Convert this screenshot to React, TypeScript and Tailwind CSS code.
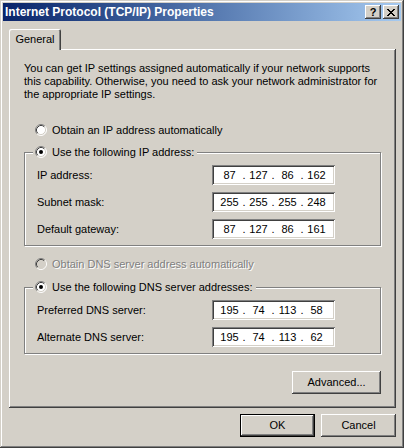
import React from "react";

const raised =
  "shadow-[inset_-1px_-1px_#404040,inset_1px_1px_#ffffff,inset_-2px_-2px_#808080]";
const sunken =
  "shadow-[inset_1px_1px_#808080,inset_-1px_-1px_#ffffff,inset_2px_2px_#404040,inset_-2px_-2px_#d4d0c8]";

function Radio({ checked, disabled }: { checked?: boolean; disabled?: boolean }) {
  return (
    <svg width="12" height="12" viewBox="0 0 12 12" className="shrink-0">
      <circle cx="6" cy="6" r="5" fill={disabled ? "#d4d0c8" : "#ffffff"} />
      <path d="M2.11 9.89 A5.5 5.5 0 0 1 9.89 2.11" stroke="#808080" fill="none" />
      <path d="M9.89 2.11 A5.5 5.5 0 0 1 2.11 9.89" stroke="#ffffff" fill="none" />
      <path d="M2.82 9.18 A4.5 4.5 0 0 1 9.18 2.82" stroke="#404040" fill="none" />
      <path d="M9.18 2.82 A4.5 4.5 0 0 1 2.82 9.18" stroke="#d4d0c8" fill="none" />
      {checked && <circle cx="6" cy="6" r="2" fill="#000000" />}
    </svg>
  );
}

function CloseGlyph() {
  const rows = ["11000011", "01100110", "00111100", "00011000", "00111100", "01100110", "11000011"];
  return (
    <svg width="8" height="7" viewBox="0 0 8 7" shapeRendering="crispEdges">
      {rows.map((r, y) =>
        r.split("").map((c, x) => (c === "1" ? <rect key={`${x}-${y}`} x={x} y={y} width="1" height="1" fill="#000" /> : null))
      )}
    </svg>
  );
}

function IpField({ parts }: { parts: string[] }) {
  return (
    <div className={`w-[123px] h-[20px] bg-white ${sunken} flex items-center pl-[5px]`}>
      {parts.map((p, i) => (
        <React.Fragment key={i}>
          {i > 0 && <span className="w-[4px] text-center">.</span>}
          <span className="w-[25px] text-center">{p}</span>
        </React.Fragment>
      ))}
    </div>
  );
}

function Row({ label, parts }: { label: string; parts: string[] }) {
  return (
    <div className="flex items-center h-[20px]">
      <span className="w-[175px]">{label}</span>
      <IpField parts={parts} />
    </div>
  );
}

function Group({ legend, children }: { legend: string; children: React.ReactNode }) {
  return (
    <fieldset className="border border-[#808080] shadow-[1px_1px_0_#ffffff,inset_1px_1px_0_#ffffff] pb-[6px]">
      <legend className="ml-[8px] pl-[2px] pr-[3px] bg-[#d4d0c8] flex items-center gap-[5px] h-[14px]">
        <Radio checked />
        <span>{legend}</span>
      </legend>
      <div className="flex flex-col gap-[7px] pt-[6px] pl-[12px]">{children}</div>
    </fieldset>
  );
}

export default function App() {
  return (
    <div
      className="w-[404px] h-[448px] bg-[#d4d0c8] p-[3px] flex flex-col text-[11px] leading-[13px] text-black font-['Liberation_Sans',Arial,sans-serif] shadow-[inset_-1px_-1px_#404040,inset_1px_1px_#d4d0c8,inset_-2px_-2px_#808080,inset_2px_2px_#ffffff]"
    >
      {/* Title bar */}
      <div className="h-[18px] bg-linear-to-r from-[#0a246a] to-[#a6caf0] flex items-center justify-between pl-[2px] pr-[2px]">
        <span className="text-white font-bold text-[12px]">Internet Protocol (TCP/IP) Properties</span>
        <div className="flex gap-[2px]">
          <div className={`w-[16px] h-[14px] bg-[#d4d0c8] ${raised} flex items-center justify-center font-bold text-[11px] leading-none`}>?</div>
          <div className={`w-[16px] h-[14px] bg-[#d4d0c8] ${raised} flex items-center justify-center`}>
            <CloseGlyph />
          </div>
        </div>
      </div>

      {/* Tab */}
      <div className="mt-[8px] pl-[6px] flex">
        <div className="relative z-10 -mb-[1px] w-[52px] h-[21px] bg-[#d4d0c8] rounded-t-[2px] shadow-[inset_1px_1px_#ffffff,inset_-1px_0_#404040,inset_-2px_0_#808080] flex items-center justify-center">
          General
        </div>
      </div>

      {/* Panel */}
      <div className={`ml-[6px] w-[387px] h-[359px] ${raised} px-[15px] pt-[13px] flex flex-col`}>
        <p className="whitespace-nowrap">
          You can get IP settings assigned automatically if your network supports
          <br />
          this capability. Otherwise, you need to ask your network administrator for
          <br />
          the appropriate IP settings.
        </p>

        <div className="mt-[22px] h-[14px] flex items-center gap-[5px] pl-[11px]">
          <Radio />
          <span>Obtain an IP address automatically</span>
        </div>

        <div className="mt-[8px]">
          <Group legend="Use the following IP address:">
            <Row label="IP address:" parts={["87", "127", "86", "162"]} />
            <Row label="Subnet mask:" parts={["255", "255", "255", "248"]} />
            <Row label="Default gateway:" parts={["87", "127", "86", "161"]} />
          </Group>
        </div>

        <div className="mt-[11px] h-[14px] flex items-center gap-[5px] pl-[11px]">
          <Radio disabled />
          <span className="text-[#808080] [text-shadow:1px_1px_0_#ffffff]">Obtain DNS server address automatically</span>
        </div>

        <div className="mt-[9px]">
          <Group legend="Use the following DNS server addresses:">
            <Row label="Preferred DNS server:" parts={["195", "74", "113", "58"]} />
            <Row label="Alternate DNS server:" parts={["195", "74", "113", "62"]} />
          </Group>
        </div>

        <div className="mt-[17px] flex justify-end">
          <div className={`w-[89px] h-[23px] ${raised} flex items-center justify-center`}>Advanced...</div>
        </div>
      </div>

      {/* Bottom buttons */}
      <div className="mt-[6px] pr-[5px] flex justify-end gap-[6px]">
        <div className="w-[75px] h-[23px] border border-black">
          <div className={`w-full h-full ${raised} flex items-center justify-center`}>OK</div>
        </div>
        <div className={`w-[75px] h-[23px] ${raised} flex items-center justify-center`}>Cancel</div>
      </div>
    </div>
  );
}
